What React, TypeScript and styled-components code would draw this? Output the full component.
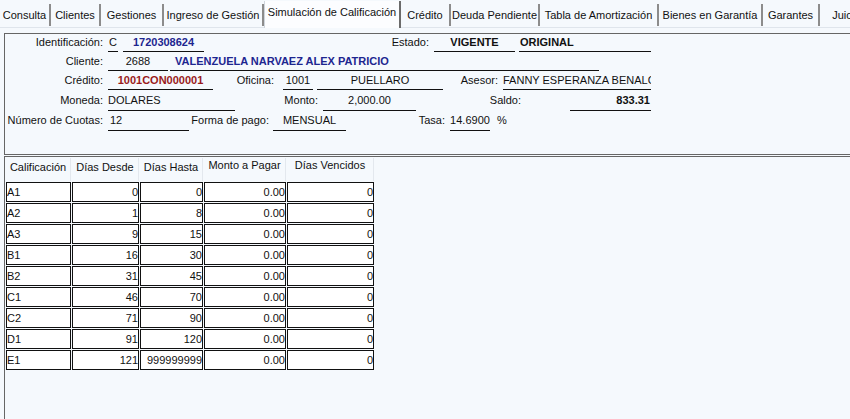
import styled, { createGlobalStyle } from "styled-components";

const GlobalStyle = createGlobalStyle`
  html, body, #root {
    margin: 0;
    height: 100%;
  }
  body {
    background: #f5f9fd;
    font-family: "Liberation Sans", Arial, sans-serif;
    font-size: 11px;
    color: #111;
    overflow: hidden;
  }
`;

const Page = styled.div`
  display: flex;
  flex-direction: column;
  height: 100vh;
  overflow: hidden;
`;

const TabBar = styled.div`
  display: flex;
  align-items: flex-start;
  height: 28px;
  box-sizing: border-box;
  border-bottom: 1px solid #dfe5ec;
  white-space: nowrap;
  flex-shrink: 0;
`;

const Tab = styled.div<{ $w?: number; $active?: boolean }>`
  flex-shrink: 0;
  width: ${(p) => (p.$w ? `${p.$w}px` : "auto")};
  box-sizing: border-box;
  text-align: center;
  font-size: 11px;
  line-height: 14px;
  color: #111;
  ${(p) =>
    p.$active
      ? `
    margin-top: 1px;
    height: 27px;
    padding-top: 4px;
    background: #fcfdff;
    border-left: 1px solid #cfd5dc;
    border-right: 2px solid #6b6b6b;
    position: relative;
    z-index: 1;
  `
      : `
    margin-top: 4px;
    height: 22px;
    padding-top: 4px;
    border-right: 2px solid #8c8c8c;
  `}
`;

const FormPanel = styled.div`
  margin: 5px 0 0 4px;
  border: 1px solid #666;
  border-right: none;
  padding-bottom: 23px;
  flex-shrink: 0;
`;

const FieldRow = styled.div<{ $h: number }>`
  display: flex;
  height: ${(p) => p.$h}px;
  line-height: ${(p) => p.$h - 1}px;
  white-space: nowrap;
`;

const Label = styled.div<{ $w: number }>`
  flex-shrink: 0;
  width: ${(p) => p.$w}px;
  text-align: right;
`;

const Value = styled.div<{
  $w: number;
  $ml: number;
  $align?: "left" | "center" | "right";
  $tone?: "blue" | "red" | "bold";
  $pad?: number;
}>`
  flex-shrink: 0;
  box-sizing: border-box;
  width: ${(p) => p.$w}px;
  margin-left: ${(p) => p.$ml}px;
  padding: 0 ${(p) => p.$pad ?? 0}px;
  border-bottom: 1px solid #111;
  text-align: ${(p) => p.$align ?? "center"};
  overflow: hidden;
  font-weight: ${(p) => (p.$tone ? 700 : 400)};
  color: ${(p) =>
    p.$tone === "blue" ? "#1d2690" : p.$tone === "red" ? "#9a1b1b" : "#111"};
`;

const Unit = styled.span`
  margin-left: 7px;
`;

const TablePanel = styled.div`
  flex: 1;
  margin: 1px 0 0 4px;
  border-top: 1px solid #666;
  border-left: 1px solid #666;
`;

const Grid = styled.table`
  border-collapse: separate;
  border-spacing: 1px;
  table-layout: fixed;
  width: 370px;
  font-size: 11px;
`;

const HeadCell = styled.th<{ $raise?: boolean }>`
  font-weight: 400;
  text-align: center;
  vertical-align: top;
  line-height: 14px;
  padding: ${(p) => (p.$raise ? "0 0 9px" : "2px 0 7px")};
  border-right: 1px solid #e3e8ee;
  white-space: nowrap;
  overflow: hidden;
`;

const Cell = styled.td<{ $num?: boolean }>`
  background: #fff;
  border: 1px solid #111;
  padding: 0;
  line-height: 18px;
  text-align: ${(p) => (p.$num ? "right" : "left")};
  white-space: nowrap;
  overflow: hidden;
`;

const tabs = [
  { name: "Consulta", w: 51 },
  { name: "Clientes", w: 50 },
  { name: "Gestiones", w: 63 },
  { name: "Ingreso de Gestión", w: 100 },
  { name: "Simulación de Calificación", w: 137, active: true },
  { name: "Crédito", w: 50 },
  { name: "Deuda Pendiente", w: 89 },
  { name: "Tabla de Amortización", w: 119 },
  { name: "Bienes en Garantía", w: 104 },
  { name: "Garantes", w: 57 },
  { name: "Juicios", w: 60 },
];

const columns = [
  { title: "Calificación", w: 65 },
  { title: "Días Desde", w: 67 },
  { title: "Días Hasta", w: 63 },
  { title: "Monto a Pagar", w: 82, raise: true },
  { title: "Días Vencidos", w: 87, raise: true },
];

const rows = [
  ["A1", "0", "0", "0.00", "0"],
  ["A2", "1", "8", "0.00", "0"],
  ["A3", "9", "15", "0.00", "0"],
  ["B1", "16", "30", "0.00", "0"],
  ["B2", "31", "45", "0.00", "0"],
  ["C1", "46", "70", "0.00", "0"],
  ["C2", "71", "90", "0.00", "0"],
  ["D1", "91", "120", "0.00", "0"],
  ["E1", "121", "999999999", "0.00", "0"],
];

export default function App() {
  return (
    <Page>
      <GlobalStyle />
      <TabBar>
        {tabs.map((t) => (
          <Tab key={t.name} $w={t.w} $active={t.active}>
            {t.name}
          </Tab>
        ))}
      </TabBar>

      <FormPanel>
        <FieldRow $h={18}>
          <Label $w={98}>Identificación:</Label>
          <Value $w={10} $ml={5}>C</Value>
          <Value $w={81} $ml={5} $tone="blue">1720308624</Value>
          <Label $w={225}>Estado:</Label>
          <Value $w={81} $ml={5} $tone="bold">VIGENTE</Value>
          <Value $w={132} $ml={4} $align="left" $pad={1} $tone="bold">ORIGINAL</Value>
        </FieldRow>
        <FieldRow $h={19}>
          <Label $w={98}>Cliente:</Label>
          <Value $w={60} $ml={5} $pad={2}>2688</Value>
          <Value $w={429} $ml={2} $align="left" $pad={5} $tone="blue">
            VALENZUELA NARVAEZ ALEX PATRICIO
          </Value>
        </FieldRow>
        <FieldRow $h={19}>
          <Label $w={98}>Crédito:</Label>
          <Value $w={105} $ml={5} $tone="red">1001CON000001</Value>
          <Label $w={61}>Oficina:</Label>
          <Value $w={30} $ml={9}>1001</Value>
          <Value $w={126} $ml={4}>PUELLARO</Value>
          <Label $w={55}>Asesor:</Label>
          <Value $w={148} $ml={5} $align="left">FANNY ESPERANZA BENALCAZAR</Value>
        </FieldRow>
        <FieldRow $h={21}>
          <Label $w={98}>Moneda:</Label>
          <Value $w={127} $ml={5} $align="left">DOLARES</Value>
          <Label $w={83}>Monto:</Label>
          <Value $w={93} $ml={5}>2,000.00</Value>
          <Label $w={105}>Saldo:</Label>
          <Value $w={81} $ml={49} $align="right" $pad={1} $tone="bold">833.31</Value>
        </FieldRow>
        <FieldRow $h={20}>
          <Label $w={98}>Número de Cuotas:</Label>
          <Value $w={81} $ml={5} $align="left" $pad={2}>12</Value>
          <Label $w={80}>Forma de pago:</Label>
          <Value $w={73} $ml={4} $pad={2}>MENSUAL</Value>
          <Label $w={99}>Tasa:</Label>
          <Value $w={40} $ml={5}>14.6900</Value>
          <Unit>%</Unit>
        </FieldRow>
      </FormPanel>

      <TablePanel>
        <Grid>
          <colgroup>
            {columns.map((c) => (
              <col key={c.title} style={{ width: c.w }} />
            ))}
          </colgroup>
          <thead>
            <tr>
              {columns.map((c) => (
                <HeadCell key={c.title} $raise={c.raise}>
                  {c.title}
                </HeadCell>
              ))}
            </tr>
          </thead>
          <tbody>
            {rows.map((r) => (
              <tr key={r[0]}>
                {r.map((v, i) => (
                  <Cell key={i} $num={i > 0}>
                    {v}
                  </Cell>
                ))}
              </tr>
            ))}
          </tbody>
        </Grid>
      </TablePanel>
    </Page>
  );
}
